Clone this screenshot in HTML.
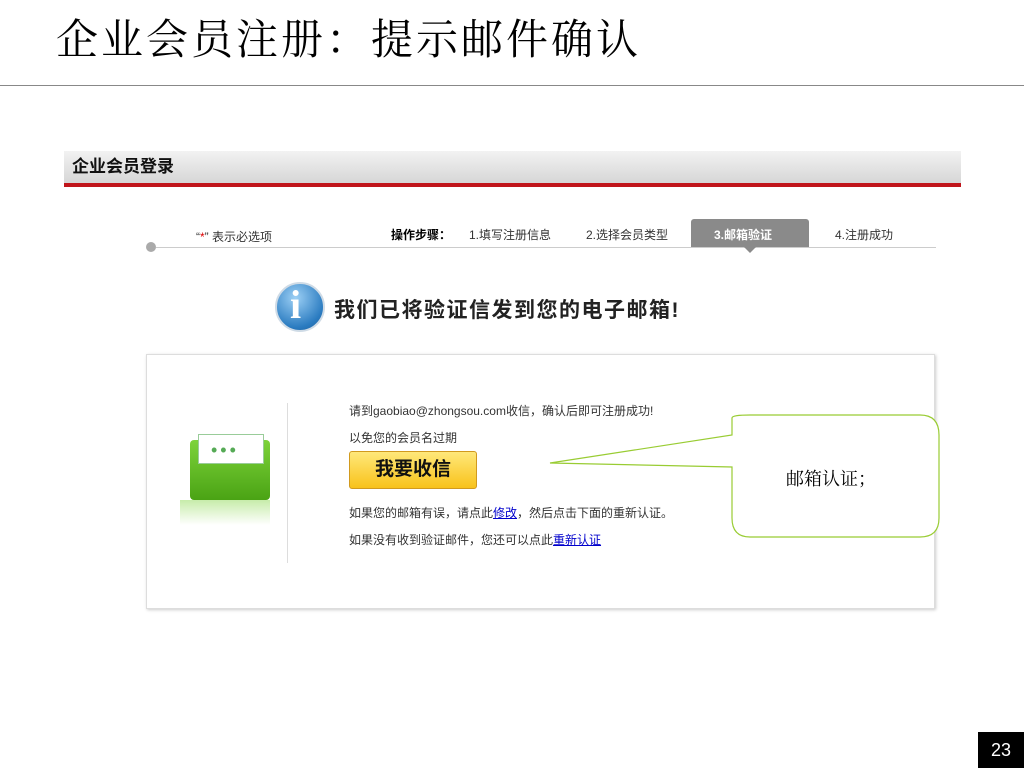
<!DOCTYPE html>
<html><head><meta charset="utf-8"><style>
*{margin:0;padding:0;box-sizing:border-box}
body{width:1024px;height:768px;background:#fff;position:relative;overflow:hidden;font-family:"Liberation Sans","Noto Sans CJK SC",sans-serif;}
.a{position:absolute;white-space:nowrap}
.s{font-size:12px;color:#333}
</style></head><body>
<div class="a" style="left:56px;top:16px;font-size:42px;letter-spacing:3px;font-family:'Liberation Serif','Noto Serif CJK SC',serif;color:#000;line-height:50px">企业会员注册：提示邮件确认</div>
<div class="a" style="left:0;top:85px;width:1024px;height:1px;background:#888"></div>

<div class="a" style="left:64px;top:151px;width:897px;height:32px;background:linear-gradient(#f2f2f2,#d6d6d6)"></div>
<div class="a" style="left:64px;top:183px;width:897px;height:4px;background:#c0151b"></div>
<div class="a" style="left:72px;top:155px;font-size:17px;font-weight:bold;color:#111;line-height:24px">企业会员登录</div>

<div class="a" style="left:146px;top:242px;width:10px;height:10px;border-radius:50%;background:#aaa"></div>
<div class="a" style="left:156px;top:247px;width:780px;height:1px;background:#ccc"></div>
<div class="a s" style="left:196px;top:228px">“<span style="color:#d00">*</span>” 表示必选项</div>
<div class="a s" style="left:391px;top:226px;color:#000;font-weight:bold">操作步骤：</div>
<div class="a s" style="left:469px;top:226px">1.填写注册信息</div>
<div class="a s" style="left:586px;top:226px">2.选择会员类型</div>
<div class="a" style="left:691px;top:219px;width:118px;height:28px;background:#8a8a8a;border-radius:3px 3px 0 0"></div>
<div class="a" style="left:744px;top:247px;width:0;height:0;border:6px solid transparent;border-top-color:#8a8a8a;border-bottom:0"></div>
<div class="a" style="left:714px;top:226px;font-size:12px;color:#fff;font-weight:bold">3.邮箱验证</div>
<div class="a s" style="left:835px;top:226px">4.注册成功</div>

<div class="a" style="left:275px;top:282px;width:50px;height:50px;border-radius:50%;background:radial-gradient(circle at 40% 30%,#9dd0f5,#2a7bc0 70%,#1d5c98);border:2px solid #cfdbe6"></div>
<div class="a" style="left:290px;top:281px;font-size:40px;color:#fff;font-family:'Liberation Serif',serif;font-weight:bold">i</div>
<div class="a" style="left:334px;top:294px;font-size:21px;letter-spacing:1.5px;color:#222;font-weight:bold">我们已将验证信发到您的电子邮箱!</div>

<div class="a" style="left:146px;top:354px;width:789px;height:255px;border:1px solid #ddd;box-shadow:1px 1px 3px #ccc"></div>
<div class="a" style="left:287px;top:403px;width:1px;height:160px;background:#ddd"></div>
<div class="a" style="left:190px;top:440px;width:80px;height:60px;background:linear-gradient(#7dd33a,#4aa314);border-radius:4px"></div>
<div class="a" style="left:198px;top:434px;width:66px;height:30px;background:#fff;border:1px solid #9c9"></div>
<div class="a" style="left:211px;top:440px;font-size:18px;color:#5a5;letter-spacing:3px">•••</div>
<div class="a" style="left:180px;top:500px;width:90px;height:25px;background:linear-gradient(#c7ecaa,#fff)"></div>

<div class="a s" style="left:349px;top:402px">请到gaobiao@zhongsou.com收信，确认后即可注册成功!</div>
<div class="a s" style="left:349px;top:429px">以免您的会员名过期</div>
<div class="a" style="left:349px;top:451px;width:128px;height:38px;background:linear-gradient(#ffe87a,#f8c21a);border:1px solid #d19a1e;border-radius:3px;font-size:19px;font-weight:bold;color:#111;text-align:center;line-height:36px">我要收信</div>
<div class="a s" style="left:349px;top:504px">如果您的邮箱有误，请点此<span style="color:#00c;text-decoration:underline">修改</span>，然后点击下面的重新认证。</div>
<div class="a s" style="left:349px;top:531px">如果没有收到验证邮件，您还可以点此<span style="color:#00c;text-decoration:underline">重新认证</span></div>

<svg class="a" style="left:540px;top:410px" width="410" height="135">
<path d="M10 53 L192 25 L192 8 Q192 5 210 5 L380 5 Q399 5 399 25 L399 108 Q399 127 380 127 L210 127 Q192 127 192 108 L192 57 Z" fill="#fff" stroke="#9c3" stroke-width="1.2"/>
</svg>
<div class="a" style="left:786px;top:465px;font-size:18px;font-family:'Liberation Serif','Noto Serif CJK SC',serif;color:#000">邮箱认证；</div>

<div class="a" style="left:978px;top:732px;width:46px;height:36px;background:#000;color:#fff;font-size:18px;text-align:center;line-height:36px">23</div>
</body></html>
